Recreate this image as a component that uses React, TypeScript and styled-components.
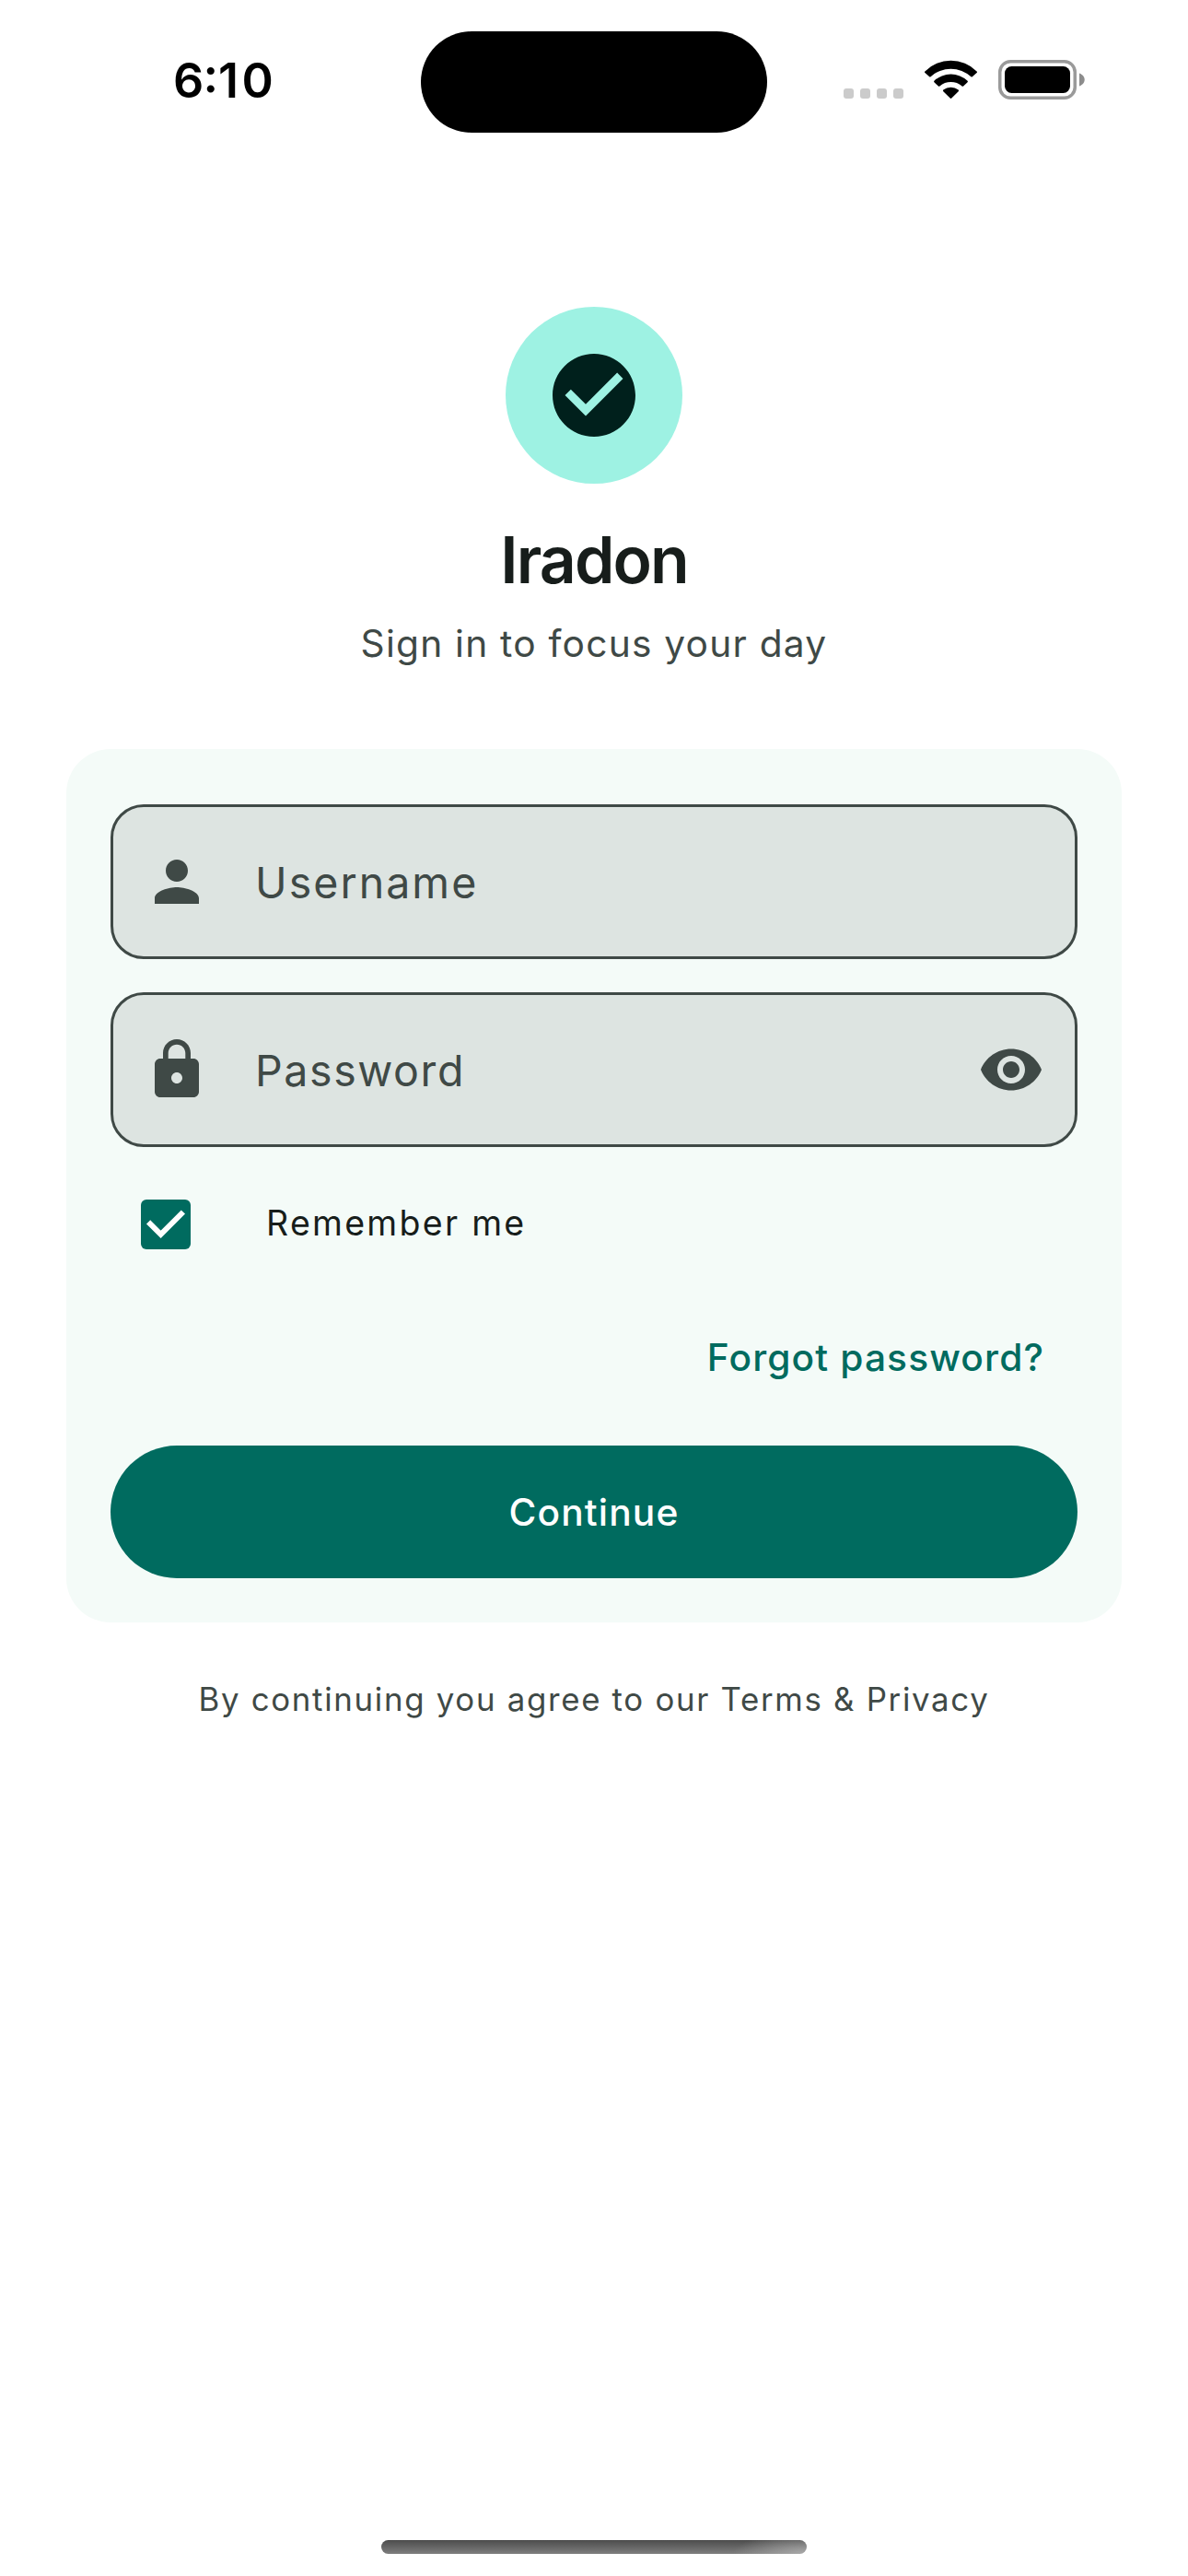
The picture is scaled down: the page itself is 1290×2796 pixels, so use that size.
import React from "react";
import styled, { createGlobalStyle } from "styled-components";

const color = {
  page: "#ffffff",
  card: "#f4fbf8",
  field: "#dde4e1",
  ink: "#171d1b",
  muted: "#3f4946",
  primary: "#006b5f",
  mint: "#9ef2e3",
  deep: "#00201c",
};

const GlobalStyle = createGlobalStyle`
  *, *::before, *::after { box-sizing: border-box; }
  html, body { margin: 0; padding: 0; background: ${color.page}; }
  body { font-family: Inter, "Liberation Sans", sans-serif; color: ${color.ink}; }
  svg { display: block; flex: none; }
`;

const Screen = styled.div`
  width: 1290px;
  height: 2796px;
  display: flex;
  flex-direction: column;
  align-items: center;
  background: ${color.page};
  overflow: hidden;
`;

const StatusBar = styled.header`
  width: 100%;
  height: 333px;
  padding-top: 34px;
  display: grid;
  grid-template-columns: 457px 376px 1fr;
  align-items: start;
`;

const Clock = styled.time`
  padding-left: 188px;
  font-size: 52px;
  font-weight: 600;
  letter-spacing: 3.5px;
  line-height: 108px;
  white-space: nowrap;
  color: #000;
`;

/* Raises the colon to the optical middle of the digits. */
const Colon = styled.span`
  margin-left: -4.3px;
  letter-spacing: 0;
  font-feature-settings: "case";
`;

const Island = styled.div`
  height: 110px;
  border-radius: 55px;
  background: #000;
`;

const StatusIcons = styled.div`
  height: 74px;
  padding-left: 83px;
  display: flex;
  align-items: flex-end;
`;

const Dots = styled.div`
  display: flex;
  gap: 7px;
  margin: 0 23px 1px 0;
`;

const Dot = styled.span`
  width: 11px;
  height: 11px;
  border-radius: 3px;
  background: #cbcbcb;
`;

const BatterySlot = styled.div`
  margin-left: 23px;
`;

const Logo = styled.div`
  width: 192px;
  height: 192px;
  flex: none;
  display: grid;
  place-items: center;
  border-radius: 50%;
  background: ${color.mint};
  color: ${color.deep};
`;

const Label = styled.span<{ $size: number; $track: number; $weight?: number }>`
  display: block;
  font-size: ${(p) => p.$size}px;
  letter-spacing: ${(p) => p.$track}px;
  font-weight: ${(p) => p.$weight ?? 400};
  white-space: nowrap;
`;

const Title = styled.h1`
  margin: 36px 0 0;
  font-size: inherit;
  line-height: 93px;
`;

const Subtitle = styled.p`
  margin: 15px 0 84px;
  line-height: 60px;
  color: ${color.muted};
`;

const Card = styled.form`
  width: 1146px;
  padding: 60px 48px 48px;
  display: flex;
  flex-direction: column;
  border-radius: 48px;
  background: ${color.card};
`;

const Field = styled.div`
  height: 168px;
  padding: 0 33px;
  display: flex;
  align-items: center;
  border: 3px solid ${color.muted};
  border-radius: 36px;
  background: ${color.field};
  color: ${color.muted};

  & + & {
    margin-top: 36px;
  }
`;

const FieldText = styled.div`
  flex: 1;
  padding: 2px 0 0 49px;
  line-height: 72px;
`;

const RememberRow = styled.label`
  height: 144px;
  margin-top: 12px;
  padding-left: 33px;
  display: flex;
  align-items: center;
  gap: 82px;
`;

const RememberText = styled.div`
  padding-bottom: 3px;
  line-height: 60px;
`;

const Checkbox = styled.span`
  width: 54px;
  height: 54px;
  border-radius: 6px;
  background: ${color.primary};
`;

const ForgotRow = styled.div`
  height: 144px;
  padding-right: 36px;
  display: flex;
  align-items: center;
  justify-content: flex-end;
  color: ${color.primary};
`;

const Continue = styled.button`
  height: 144px;
  margin-top: 24px;
  padding: 0;
  border: 0;
  border-radius: 72px;
  background: ${color.primary};
  color: #fff;
  font-family: inherit;
`;

const Terms = styled.p`
  margin: 59px 0 0;
  line-height: 48px;
  color: ${color.muted};
`;

const HomeIndicator = styled.div`
  width: 462px;
  height: 15px;
  margin: auto 0 24px;
  border-radius: 7.5px;
  background:
    radial-gradient(ellipse 80px 24px at 100% 100%, rgba(190, 190, 190, 0.7), rgba(190, 190, 190, 0)),
    linear-gradient(#4c4c4c, #7e7e7e);
`;

const Material = ({ d, size = 72 }: { d: string; size?: number }) => (
  <svg width={size} height={size} viewBox="0 0 24 24" fill="currentColor">
    <path d={d} />
  </svg>
);

const icons = {
  check:
    "M12 2C6.48 2 2 6.48 2 12s4.48 10 10 10 10-4.48 10-10S17.52 2 12 2zm-2 15l-5-5 1.41-1.41L10 14.17l7.59-7.59L19 8l-9 9z",
  person:
    "M12 12c2.21 0 4-1.79 4-4s-1.79-4-4-4-4 1.79-4 4 1.79 4 4 4zm0 2c-2.67 0-8 1.34-8 4v2h16v-2c0-2.66-5.33-4-8-4z",
  lock:
    "M18 8h-1V6c0-2.76-2.24-5-5-5S7 3.24 7 6v2H6c-1.1 0-2 .9-2 2v10c0 1.1.9 2 2 2h12c1.1 0 2-.9 2-2V10c0-1.1-.9-2-2-2zm-6 9c-1.1 0-2-.9-2-2s.9-2 2-2 2 .9 2 2-.9 2-2 2zm3.1-9H8.9V6c0-1.71 1.39-3.1 3.1-3.1 1.71 0 3.1 1.39 3.1 3.1v2z",
  eye:
    "M12 4.5C7 4.5 2.73 7.61 1 12c1.73 4.39 6 7.5 11 7.5s9.27-3.11 11-7.5c-1.73-4.39-6-7.5-11-7.5zM12 17c-2.76 0-5-2.24-5-5s2.24-5 5-5 5 2.24 5 5-2.24 5-5 5zm0-8c-1.66 0-3 1.34-3 3s1.34 3 3 3 3-1.34 3-3-1.34-3-3-3z",
};

const Wifi = () => (
  <svg width="57" height="43" viewBox="0 0 57 43">
    <path d="M.4 12.4A40 40 0 0 1 56.6 12.4Q57.4 13.1 56.6 13.9L51.8 18.3Q51.1 18.9 50.4 18.3A32 32 0 0 0 6.6 18.3Q5.9 18.9 5.2 18.3L.4 13.9Q-.4 13.1 .4 12.4Z" />
    <path d="M10.4 22.7A26.5 26.5 0 0 1 46.6 22.7Q47.3 23.5 46.6 24.2L42.1 28.5Q41.4 29.1 40.6 28.5A18.6 18.6 0 0 0 16.4 28.5Q15.6 29.1 14.9 28.5L10.4 24.2Q9.7 23.5 10.4 22.7Z" />
    <path d="M20.3 32.6A13 13 0 0 1 36.7 32.6Q37.5 33.4 36.7 34.2L29.3 41.5Q28.5 42.3 27.7 41.5L20.3 34.2Q19.5 33.4 20.3 32.6Z" />
  </svg>
);

const Battery = () => (
  <svg width="95" height="43" viewBox="0 0 95 43">
    <rect x="1.75" y="1.75" width="81.5" height="39.5" rx="11.5" fill="none" stroke="#9a9a9a" strokeWidth="3.5" />
    <rect x="7" y="7" width="71" height="29" rx="7.5" />
    <path d="M88 14.5c3.4 1.2 5.7 3.8 5.7 7s-2.3 5.8-5.7 7z" fill="#8c8c8c" />
  </svg>
);

export default function App() {
  return (
    <Screen>
      <GlobalStyle />
      <StatusBar>
        <Clock>
          6<Colon>:</Colon>10
        </Clock>
        <Island />
        <StatusIcons>
          <Dots>
            <Dot />
            <Dot />
            <Dot />
            <Dot />
          </Dots>
          <Wifi />
          <BatterySlot>
            <Battery />
          </BatterySlot>
        </StatusIcons>
      </StatusBar>

      <Logo>
        <Material d={icons.check} size={108} />
      </Logo>
      <Title>
        <Label $size={69.7} $track={-1.9} $weight={600}>Iradon</Label>
      </Title>
      <Subtitle>
        <Label $size={40.7} $track={1.22}>Sign in to focus your day</Label>
      </Subtitle>

      <Card>
        <Field>
          <Material d={icons.person} />
          <FieldText>
            <Label $size={46.5} $track={2.05}>Username</Label>
          </FieldText>
        </Field>
        <Field>
          <Material d={icons.lock} />
          <FieldText>
            <Label $size={46.5} $track={1.6}>Password</Label>
          </FieldText>
          <Material d={icons.eye} />
        </Field>
        <RememberRow>
          <Checkbox>
            <svg width="54" height="54" viewBox="0 0 54 54" fill="none" stroke="#fff" strokeWidth="6">
              <path d="M8.1 24.3L21.6 37.8L45.9 13.5" />
            </svg>
          </Checkbox>
          <RememberText>
            <Label $size={37.5} $track={2.3}>Remember me</Label>
          </RememberText>
        </RememberRow>
        <ForgotRow>
          <Label $size={40.7} $track={1.12} $weight={500}>Forgot password?</Label>
        </ForgotRow>
        <Continue type="button">
          <Label $size={40.7} $track={1.15} $weight={500}>Continue</Label>
        </Continue>
      </Card>

      <Terms>
        <Label $size={34.8} $track={1.7}>By continuing you agree to our Terms &amp; Privacy</Label>
      </Terms>
      <HomeIndicator />
    </Screen>
  );
}
